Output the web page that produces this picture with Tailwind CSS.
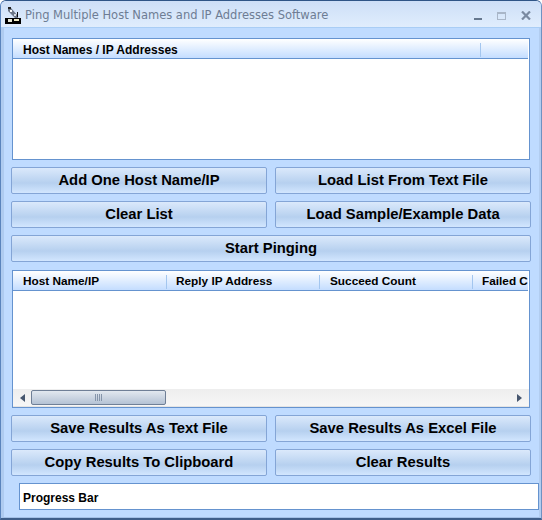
<!DOCTYPE html>
<html lang="en">
<head>
    <meta charset="UTF-8">
    <title>Ping Multiple Host Names and IP Addresses Software</title>
    <script src="https://cdn.jsdelivr.net/npm/@tailwindcss/browser@4"></script>
</head>
<body class="bg-white">
<div class="w-[542px] h-[520px] overflow-hidden flex flex-col bg-[#bfdbff] border-x-[1px] border-l-[#5a84bd] border-r-[#6f92c2] border-t-[1px] border-t-[#2f5587] border-b-[2px] border-b-[#3f5f8a] rounded-t-[6px] font-['Liberation_Sans',sans-serif] text-black">

    <!-- title bar -->
    <header class="h-[27px] shrink-0 flex items-center pl-[4px] pr-[10px] pt-[3px] bg-gradient-to-b from-[#cddff7] to-[#e0edfd] border-b border-[#a9cdf5]">
        <svg class="w-[17px] h-[17px] shrink-0" viewBox="0 0 17 17">
            <rect x="0" y="11" width="16" height="6" fill="#000"/>
            <rect x="3" y="12" width="4" height="3" fill="#e8e8d8"/>
            <rect x="9" y="12" width="5" height="2" fill="#f4efc8"/>
            <path d="M3 1h3l7 8v2h-3L3 4z" fill="#6d7787"/>
            <rect x="3" y="0" width="3" height="2" fill="#222"/>
            <rect x="5" y="3" width="2" height="2" fill="#fff"/>
            <rect x="9" y="7" width="2" height="2" fill="#d8dde4"/>
            <rect x="12" y="5" width="1" height="5" fill="#111"/>
        </svg>
        <span class="ml-[3px] font-['DejaVu_Sans',sans-serif] text-[11.5px] text-[#6e7d94]">Ping Multiple Host Names and IP Addresses Software</span>
        <div class="ml-auto flex items-center">
            <span class="w-[8px] h-[2px] mt-[6px] bg-[#66788f]"></span>
            <span class="ml-[15px] w-[9px] h-[8px] border border-[#a9b6c8] border-t-[2px]"></span>
            <svg class="ml-[15px] w-[10px] h-[9px]" viewBox="0 0 10 9"><path d="M1 0.5l8 8M9 0.5l-8 8" stroke="#7a8aa1" stroke-width="2.2"/></svg>
        </div>
    </header>

    <main class="flex-1 flex flex-col border-l-[3px] border-r-[2px] border-b border-l-[#aecbf0] border-r-[#b2cdf0] border-b-[#a3c0e6] pl-[7px] pt-[10px]">
        <!-- host list -->
        <section class="h-[122px] ml-[1px] w-[518px] bg-white border border-[#6593cf] pr-[1px]">
            <div class="h-[20px] pt-[2px] flex items-center bg-gradient-to-b from-white to-[#c4ddff] border-b border-[#6593cf] text-[12px] font-bold">
                <span class="w-[467px] pl-[10px]">Host Names / IP Addresses</span>
                <span class="w-[1px] h-[14px] bg-[#a3c6ef]"></span>
            </div>
        </section>

        <div class="mt-[7px] grid grid-cols-2 gap-x-[8px] gap-y-[7px] w-[520px]">
            <button class="h-[27px] rounded-[2px] border border-[#84a5d6] bg-gradient-to-b from-[#dbe9fb] via-[#b6d0ef] via-60% to-[#d2e6fe] text-[14.8px] font-bold">Add One Host Name/IP</button>
            <button class="h-[27px] rounded-[2px] border border-[#84a5d6] bg-gradient-to-b from-[#dbe9fb] via-[#b6d0ef] via-60% to-[#d2e6fe] text-[14.8px] font-bold">Load List From Text File</button>
            <button class="h-[27px] rounded-[2px] border border-[#84a5d6] bg-gradient-to-b from-[#dbe9fb] via-[#b6d0ef] via-60% to-[#d2e6fe] text-[14.8px] font-bold">Clear List</button>
            <button class="h-[27px] rounded-[2px] border border-[#84a5d6] bg-gradient-to-b from-[#dbe9fb] via-[#b6d0ef] via-60% to-[#d2e6fe] text-[14.8px] font-bold">Load Sample/Example Data</button>
            <button class="col-span-2 h-[27px] rounded-[2px] border border-[#84a5d6] bg-gradient-to-b from-[#dbe9fb] via-[#b6d0ef] via-60% to-[#d2e6fe] text-[14.8px] font-bold">Start Pinging</button>
        </div>

        <!-- results list -->
        <section class="mt-[8px] h-[138px] ml-[1px] w-[518px] bg-white border border-[#6593cf] flex flex-col">
            <div class="h-[20px] pt-[2px] w-[515px] shrink-0 overflow-hidden flex items-center bg-gradient-to-b from-white to-[#c4ddff] border-b border-[#6593cf] text-[11.8px] font-bold whitespace-nowrap">
                <span class="w-[153px] shrink-0 pl-[10px]">Host Name/IP</span>
                <span class="w-[1px] h-[14px] shrink-0 bg-[#a3c6ef]"></span>
                <span class="w-[152px] shrink-0 pl-[9px]">Reply IP Address</span>
                <span class="w-[1px] h-[14px] shrink-0 bg-[#a3c6ef]"></span>
                <span class="w-[152px] shrink-0 pl-[10px]">Succeed Count</span>
                <span class="w-[1px] h-[14px] shrink-0 bg-[#a3c6ef]"></span>
                <span class="w-[100px] shrink-0 pl-[9px]">Failed Count</span>
            </div>
            <div class="flex-1"></div>
            <!-- scrollbar -->
            <div class="h-[18px] flex items-center bg-gradient-to-b from-[#eeeeee] to-[#f6f6f6] border-b border-[#e4e4e4]">
                <svg class="w-[6px] h-[8px] ml-[7px]" viewBox="0 0 6 8"><path d="M5 0v8L0 4z" fill="#46566e"/></svg>
                <div class="ml-[5px] w-[135px] h-[15px] flex items-center justify-center rounded-[2px] border border-[#6f7f96] bg-gradient-to-b from-[#e2e8ef] to-[#b4c2d4]">
                    <svg class="w-[7px] h-[7px]" viewBox="0 0 7 7"><path d="M.5 0v7M2.5 0v7M4.5 0v7M6.5 0v7" stroke="#8595aa"/></svg>
                </div>
                <svg class="w-[6px] h-[8px] ml-auto mr-[7px]" viewBox="0 0 6 8"><path d="M1 0v8l5-4z" fill="#46566e"/></svg>
            </div>
        </section>

        <div class="mt-[7px] grid grid-cols-2 gap-x-[8px] gap-y-[7px] w-[520px]">
            <button class="h-[27px] rounded-[2px] border border-[#84a5d6] bg-gradient-to-b from-[#dbe9fb] via-[#b6d0ef] via-60% to-[#d2e6fe] text-[14.8px] font-bold">Save Results As Text File</button>
            <button class="h-[27px] rounded-[2px] border border-[#84a5d6] bg-gradient-to-b from-[#dbe9fb] via-[#b6d0ef] via-60% to-[#d2e6fe] text-[14.8px] font-bold">Save Results As Excel File</button>
            <button class="h-[27px] rounded-[2px] border border-[#84a5d6] bg-gradient-to-b from-[#dbe9fb] via-[#b6d0ef] via-60% to-[#d2e6fe] text-[14.8px] font-bold">Copy Results To Clipboard</button>
            <button class="h-[27px] rounded-[2px] border border-[#84a5d6] bg-gradient-to-b from-[#dbe9fb] via-[#b6d0ef] via-60% to-[#d2e6fe] text-[14.8px] font-bold">Clear Results</button>
        </div>

        <div class="mt-[7px] ml-[8px] w-[520px] h-[27px] pt-[2px] flex items-center pl-[3px] bg-white border border-[#6593cf] text-[12px] font-bold">Progress Bar</div>
    </main>
</div>
</body>
</html>
